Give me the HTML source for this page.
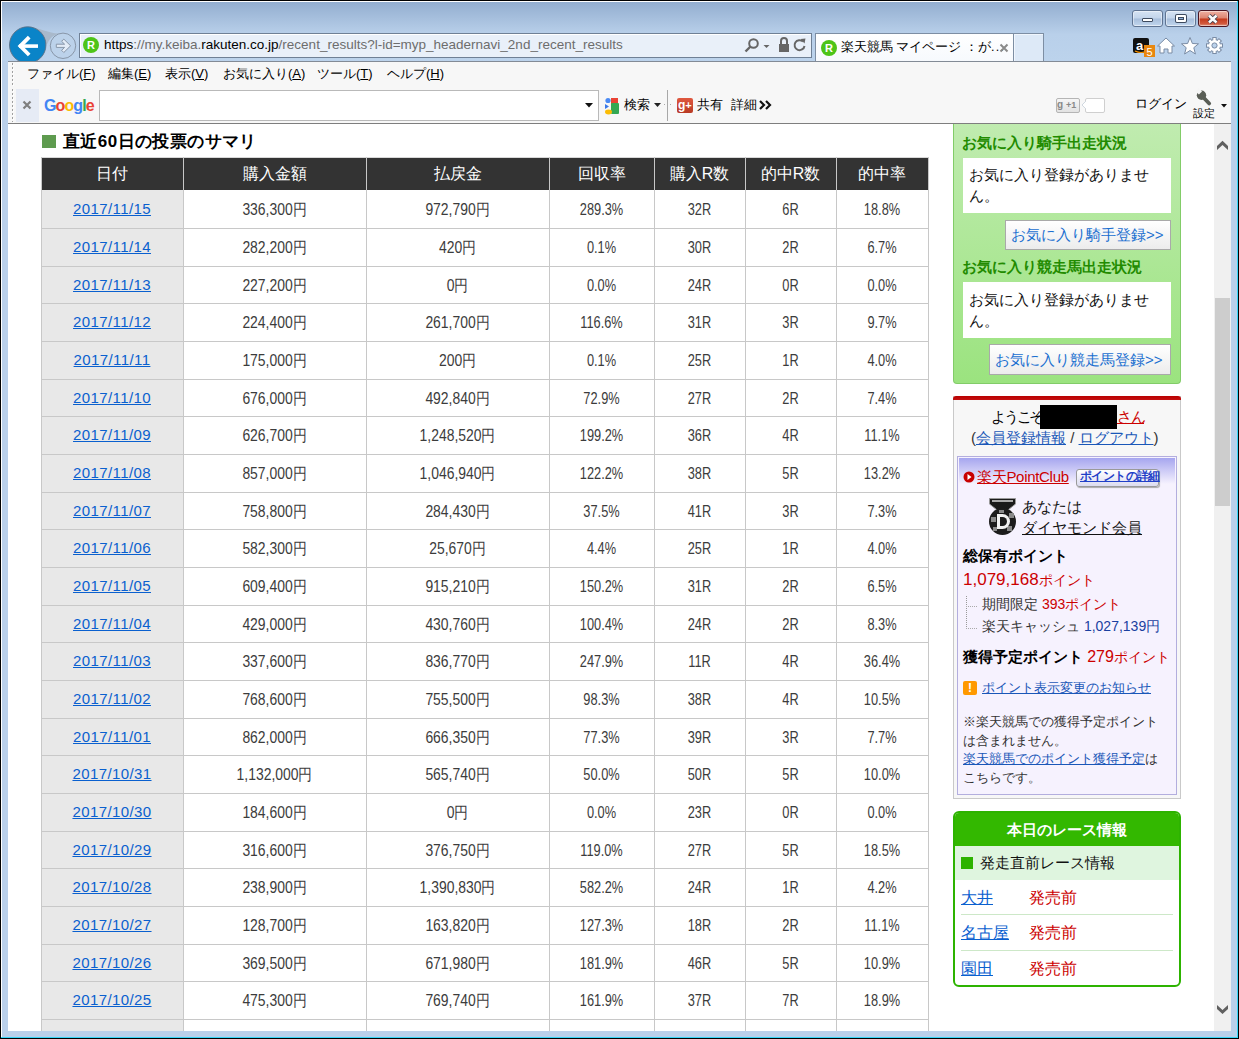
<!DOCTYPE html>
<html><head><meta charset="utf-8">
<style>
html,body{margin:0;padding:0;}
body{width:1239px;height:1039px;position:relative;overflow:hidden;background:#000;font-family:"Liberation Sans",sans-serif;color:#000;}
.a{position:absolute;}
.t{position:absolute;white-space:nowrap;line-height:1;}
.c{position:absolute;white-space:nowrap;line-height:1;text-align:center;}
u{text-decoration:underline;}
</style></head><body>

<div class="a" style="left:1px;top:1px;width:1237px;height:1037px;background:#38d6f8;"></div>
<div class="a" style="left:1px;top:1px;width:1236px;height:1036px;background:#bad0ea;"></div>
<div class="a" style="left:1px;top:1px;width:1236px;height:1px;background:#fff;"></div>
<div class="a" style="left:1px;top:1px;width:1px;height:1036px;background:#fff;"></div>
<div class="a" style="left:2px;top:2px;width:1235px;height:59px;background:linear-gradient(#93aed0,#b9d0ea 55%,#bcd3ec);"></div>
<div class="a" style="left:1132px;top:10px;width:29px;height:15px;border:1px solid #5f7492;border-radius:3px;background:linear-gradient(#d6e3f3,#c3d5eb 48%,#a7bedb 52%,#bcd1ea 90%,#d0e0f2);box-shadow:inset 0 0 0 1px rgba(255,255,255,.45);"><div class="a" style="left:9px;top:7px;width:9px;height:2px;background:#fff;border:1px solid #3d4a5e;border-radius:1px;"></div></div>
<div class="a" style="left:1165px;top:10px;width:29px;height:15px;border:1px solid #5f7492;border-radius:3px;background:linear-gradient(#d6e3f3,#c3d5eb 48%,#a7bedb 52%,#bcd1ea 90%,#d0e0f2);box-shadow:inset 0 0 0 1px rgba(255,255,255,.45);"><div class="a" style="left:10px;top:4px;width:6px;height:3px;border:2px solid #fff;background:#8fb0d8;box-shadow:0 0 0 1px #3d4a5e, inset 0 0 0 1px #3d4a5e;border-radius:1px;"></div></div>
<div class="a" style="left:1198px;top:10px;width:29px;height:15px;border:1px solid #4a1522;border-radius:3px;background:linear-gradient(#eeb0a2,#dc8470 48%,#c4391c 52%,#d25a3e 85%,#e09a88);box-shadow:inset 0 0 0 1px rgba(255,255,255,.45);"><svg class="a" style="left:7px;top:2px" width="14" height="12" viewBox="0 0 14 12"><path d="M3 2.5 L10.5 9.5 M10.5 2.5 L3 9.5" stroke="#3d3a48" stroke-width="4.4"/><path d="M3 2.5 L10.5 9.5 M10.5 2.5 L3 9.5" stroke="#fafafa" stroke-width="2.6"/></svg></div>
<svg class="a" style="left:0;top:20px" width="90" height="42" viewBox="0 20 90 42">
<path d="M27 27.2 C40 27 48 33.5 59 33.6 C53 35.5 49 39 47 44.5 L38 40 Z" fill="#a9b9cb"/>
<circle cx="63" cy="45.8" r="12.7" fill="#bcd2ea" stroke="#8896a8" stroke-width="1"/>
<path d="M56.3 44.2 L64.6 44.2 L61.6 41.3 L63.8 39.1 L70.6 45.8 L63.8 52.5 L61.6 50.3 L64.6 47.4 L56.3 47.4 Z" fill="#e3ecf7" stroke="#8896a8" stroke-width="1" stroke-linejoin="miter"/>
<circle cx="27.7" cy="45" r="18.2" fill="#0a84c8" stroke="#5b6f84" stroke-width="0.9"/>
<path d="M19 46.1 L38 46.1" stroke="#fff" stroke-width="3.6"/>
<path d="M29.2 37.2 L20.3 46.1 L29.2 55" stroke="#fff" stroke-width="3.8" fill="none" stroke-linecap="butt" stroke-linejoin="miter"/>
</svg>
<div class="a" style="left:79px;top:33px;width:731px;height:23px;border:1px solid #6f8095;background:#e9f0f9;box-shadow:inset 1px 1px 0 #fff;"></div>
<div class="a" style="left:83px;top:37px;width:16px;height:16px;border-radius:50%;background:#4dc418;"></div>
<div class="t" style="left:83px;top:38px;width:16px;text-align:center;font-size:11px;font-weight:bold;color:#fff;line-height:14px;">R</div>
<div class="t" style="left:104px;top:38px;font-size:13.5px;color:#6d6d6d;"><span style="color:#000">https</span>://my.keiba.<span style="color:#000">rakuten.co.jp</span>/recent_results?l-id=myp_headernavi_2nd_recent_results</div>
<svg class="a" style="left:742px;top:36px" width="66" height="20" viewBox="742 36 66 20">
<circle cx="753.5" cy="43.5" r="4.3" fill="none" stroke="#666" stroke-width="2"/>
<path d="M750.5 46.5 L745.5 51.5" stroke="#666" stroke-width="2.4"/>
<path d="M763.5 45 L769.5 45 L766.5 48 Z" fill="#666"/>
<rect x="779" y="44" width="10" height="8" fill="#666"/>
<path d="M781 44 L781 41 A3 3 0 0 1 787 41 L787 44" fill="none" stroke="#666" stroke-width="2"/>
<path d="M803 41.5 A5 5 0 1 0 804.5 46" fill="none" stroke="#666" stroke-width="2"/>
<path d="M800.5 39 L805.5 38.5 L804.5 43.5 Z" fill="#666"/>
</svg>
<div class="a" style="left:815px;top:33px;width:198px;height:29px;border:1px solid #7d8ea3;border-bottom:none;background:linear-gradient(#ffffff,#f6f9fd);"></div>
<div class="a" style="left:821px;top:40px;width:16px;height:16px;border-radius:50%;background:#4dc418;"></div>
<div class="t" style="left:821px;top:41px;width:16px;text-align:center;font-size:11px;font-weight:bold;color:#fff;line-height:14px;">R</div>
<div class="t" style="left:841px;top:41px;font-size:12.5px;color:#000;">楽天競馬 マイページ ：が<span style="letter-spacing:1.2px">...</span></div>
<svg class="a" style="left:999px;top:43px" width="10" height="10" viewBox="0 0 10 10"><path d="M1.5 1.5 L8.5 8.5 M8.5 1.5 L1.5 8.5" stroke="#8a8a8a" stroke-width="2"/></svg>
<div class="a" style="left:1013px;top:33px;width:29px;height:29px;border:1px solid #7d8ea3;border-bottom:none;background:#dde9f7;box-shadow:inset 1px 1px 0 #f0f6fd;"></div>
<svg class="a" style="left:1130px;top:35px" width="96" height="26" viewBox="1130 35 96 26">
<rect x="1133" y="38" width="16" height="15" rx="2" fill="#111"/>
<text x="1136" y="50" font-family="Liberation Sans" font-size="13" font-weight="bold" fill="#fff">a</text>
<path d="M1135 51 Q1141 54 1147 51" stroke="#f90" stroke-width="1.2" fill="none"/>
<rect x="1144" y="45" width="11" height="12" fill="#e8870f"/>
<text x="1146.5" y="55.5" font-family="Liberation Sans" font-size="11" fill="#fff">5</text>
<path d="M1166 38 L1174.5 46 L1172 46 L1172 53 L1168 53 L1168 49 L1164 49 L1164 53 L1160 53 L1160 46 L1157.5 46 Z" fill="#fff" stroke="#7a8ca5" stroke-width="1"/>
<path d="M1190 37.5 L1192.4 43.5 L1198.5 43.8 L1193.8 47.7 L1195.4 54 L1190 50.5 L1184.6 54 L1186.2 47.7 L1181.5 43.8 L1187.6 43.5 Z" fill="#fff" stroke="#7a8ca5" stroke-width="1"/>
<g transform="translate(1214.5 45.5)"><path d="M-1.5 -8 L1.5 -8 L2 -5.5 L4 -4.6 L6.1 -6.2 L8.2 -4.1 L6.6 -2 L7.5 0 L-0 0 Z" fill="none"/></g>
<circle cx="1214.5" cy="45.5" r="6" fill="#fff" stroke="#7a8ca5" stroke-width="1"/>
<circle cx="1214.5" cy="45.5" r="2.6" fill="#bcd3ec" stroke="#7a8ca5" stroke-width="1"/>
</svg>
<svg class="a" style="left:1130px;top:35px" width="96" height="26" viewBox="1130 35 96 26"><rect x="1212.8" y="37.5" width="3.4" height="4" fill="#fff" stroke="#7a8ca5" stroke-width="1" transform="rotate(0 1214.5 45.5)"/><rect x="1212.8" y="37.5" width="3.4" height="4" fill="#fff" stroke="#7a8ca5" stroke-width="1" transform="rotate(45 1214.5 45.5)"/><rect x="1212.8" y="37.5" width="3.4" height="4" fill="#fff" stroke="#7a8ca5" stroke-width="1" transform="rotate(90 1214.5 45.5)"/><rect x="1212.8" y="37.5" width="3.4" height="4" fill="#fff" stroke="#7a8ca5" stroke-width="1" transform="rotate(135 1214.5 45.5)"/><rect x="1212.8" y="37.5" width="3.4" height="4" fill="#fff" stroke="#7a8ca5" stroke-width="1" transform="rotate(180 1214.5 45.5)"/><rect x="1212.8" y="37.5" width="3.4" height="4" fill="#fff" stroke="#7a8ca5" stroke-width="1" transform="rotate(225 1214.5 45.5)"/><rect x="1212.8" y="37.5" width="3.4" height="4" fill="#fff" stroke="#7a8ca5" stroke-width="1" transform="rotate(270 1214.5 45.5)"/><rect x="1212.8" y="37.5" width="3.4" height="4" fill="#fff" stroke="#7a8ca5" stroke-width="1" transform="rotate(315 1214.5 45.5)"/><circle cx="1214.5" cy="45.5" r="5.5" fill="#fff"/><circle cx="1214.5" cy="45.5" r="2.6" fill="#bcd3ec" stroke="#7a8ca5" stroke-width="1"/></svg>
<div class="a" style="left:8px;top:61px;width:1223px;height:1px;background:#838b96;"></div>
<div class="a" style="left:8px;top:62px;width:1223px;height:61px;background:#f7f7f7;"></div>
<div class="a" style="left:8px;top:123px;width:1223px;height:1px;background:#7e7e7e;"></div>
<div class="a" style="left:12px;top:63px;width:1px;height:22px;background:repeating-linear-gradient(#a0a0a0 0 2px,transparent 2px 4px);"></div>
<div class="a" style="left:13px;top:64px;width:1px;height:22px;background:repeating-linear-gradient(#fff 0 2px,transparent 2px 4px);"></div>
<div class="a" style="left:12px;top:89px;width:1px;height:33px;background:repeating-linear-gradient(#a0a0a0 0 2px,transparent 2px 4px);"></div>
<div class="a" style="left:13px;top:90px;width:1px;height:33px;background:repeating-linear-gradient(#fff 0 2px,transparent 2px 4px);"></div>
<div class="t" style="left:27px;top:67px;font-size:13px;color:#000;">ファイル(<u>F</u>)</div>
<div class="t" style="left:108px;top:67px;font-size:13px;color:#000;">編集(<u>E</u>)</div>
<div class="t" style="left:165px;top:67px;font-size:13px;color:#000;">表示(<u>V</u>)</div>
<div class="t" style="left:223px;top:67px;font-size:13px;color:#000;">お気に入り(<u>A</u>)</div>
<div class="t" style="left:317px;top:67px;font-size:13px;color:#000;">ツール(<u>T</u>)</div>
<div class="t" style="left:387px;top:67px;font-size:13px;color:#000;">ヘルプ(<u>H</u>)</div>
<div class="a" style="left:16px;top:89px;width:23px;height:33px;background:#e6ebf5;"></div>
<svg class="a" style="left:22px;top:100px" width="10" height="10" viewBox="0 0 10 10"><path d="M1.5 1.5 L8.5 8.5 M8.5 1.5 L1.5 8.5" stroke="#7f7f7f" stroke-width="2.2"/></svg>
<div class="t" style="left:44px;top:98px;font-size:16px;font-weight:bold;letter-spacing:-0.9px;"><span style="color:#4285f4">G</span><span style="color:#ea4335">o</span><span style="color:#fbbc05">o</span><span style="color:#4285f4">g</span><span style="color:#34a853">l</span><span style="color:#ea4335">e</span></div>
<div class="a" style="left:99px;top:90px;width:498px;height:29px;border:1px solid #b9b9b9;background:#fff;"></div>
<svg class="a" style="left:585px;top:103px" width="9" height="5"><path d="M0 0 L8 0 L4 4.5 Z" fill="#111"/></svg>
<svg class="a" style="left:603px;top:97px" width="18" height="18" viewBox="0 0 18 18">
<circle cx="5" cy="3.5" r="2.6" fill="#4a8af4"/>
<path d="M2 7 L6 9.5 L2 12 Z" fill="#3b78e7"/>
<rect x="8" y="1" width="7" height="7" fill="#ea4335"/>
<rect x="8" y="6" width="8" height="11" rx="1" fill="#34a853"/>
<ellipse cx="5.5" cy="15" rx="3.5" ry="2.4" fill="#fbbc05"/>
</svg>
<div class="t" style="left:624px;top:98px;font-size:13px;">検索</div>
<svg class="a" style="left:654px;top:103px" width="8" height="5"><path d="M0 0 L7 0 L3.5 4 Z" fill="#222"/></svg>
<div class="a" style="left:664px;top:104px;width:1px;height:1px;background:#aaa;"></div><div class="a" style="left:670px;top:104px;width:1px;height:1px;background:#aaa;"></div>
<div class="a" style="left:667px;top:90px;width:1px;height:31px;background:#a8a8a8;"></div>
<div class="a" style="left:677px;top:98px;width:16px;height:15px;background:linear-gradient(#e0583f,#b83a24);border-radius:2px;"></div>
<div class="t" style="left:678px;top:99px;font-size:12px;font-weight:bold;color:#fff;">g<span style="font-size:11px">+</span></div>
<div class="t" style="left:697px;top:98px;font-size:13px;">共有</div>
<div class="t" style="left:731px;top:98px;font-size:13px;">詳細</div>
<svg class="a" style="left:759px;top:100px" width="13" height="10" viewBox="0 0 13 10"><path d="M1 1 L5 5 L1 9 M7 1 L11 5 L7 9" stroke="#111" stroke-width="2.2" fill="none"/></svg>
<div class="a" style="left:1056px;top:98px;width:22px;height:13px;border:1px solid #b5b5b5;border-radius:2px;background:linear-gradient(#f6f6f6,#e2e2e2);"></div>
<div class="t" style="left:1057px;top:100px;font-size:10px;color:#888;font-weight:bold;font-family:'Liberation Sans',sans-serif;">g <span style="font-size:9px">+1</span></div>
<div class="a" style="left:1085px;top:98px;width:18px;height:13px;border:1px solid #cfcfcf;border-radius:2px;background:#fff;"></div>
<svg class="a" style="left:1081px;top:100px" width="6" height="10" viewBox="0 0 6 10"><path d="M5 1 L1 5 L5 9" fill="#fff" stroke="#d0d8e0" stroke-width="1"/></svg>
<div class="t" style="left:1135px;top:98px;font-size:12.5px;">ログイン</div>
<svg class="a" style="left:1190px;top:86px" width="24" height="22" viewBox="1190 86 24 22">
<circle cx="1201.5" cy="95.3" r="4.7" fill="#5a5e56"/>
<path d="M1202 96 L1209.2 103.5" stroke="#5a5e56" stroke-width="3.8" stroke-linecap="round"/>
<path d="M1195.5 91.2 L1198.6 88.1 L1202 91.5 L1198.9 94.6 Z" fill="#f5f5f5"/>
</svg>
<div class="t" style="left:1193px;top:108px;font-size:11px;">設定</div>
<svg class="a" style="left:1221px;top:104px" width="7" height="4"><path d="M0 0 L6 0 L3 3.5 Z" fill="#111"/></svg>
<div class="a" style="left:8px;top:124px;width:1223px;height:907px;background:#fff;overflow:hidden;"><div class="a" style="left:-8px;top:-124px;width:1239px;height:1039px;">
<div class="a" style="left:42px;top:135px;width:14px;height:13px;background:#5e9b4f;"></div>
<div class="t" style="left:63px;top:133px;font-size:17px;font-weight:bold;letter-spacing:0.4px;">直近60日の投票のサマリ</div>
<div class="a" style="left:42px;top:158px;width:886px;height:32px;background:#333;"></div>
<div class="a" style="left:42px;top:190px;width:141px;height:900px;background:#e8e8e8;"></div>
<div class="a" style="left:41px;top:157px;width:888px;height:1px;background:#d8d8d8;"></div>
<div class="a" style="left:41px;top:157px;width:1px;height:900px;background:#c8c8c8;"></div>
<div class="a" style="left:183px;top:157px;width:1px;height:900px;background:#c8c8c8;"></div>
<div class="a" style="left:366px;top:157px;width:1px;height:900px;background:#c8c8c8;"></div>
<div class="a" style="left:549px;top:157px;width:1px;height:900px;background:#c8c8c8;"></div>
<div class="a" style="left:654px;top:157px;width:1px;height:900px;background:#c8c8c8;"></div>
<div class="a" style="left:745px;top:157px;width:1px;height:900px;background:#c8c8c8;"></div>
<div class="a" style="left:836px;top:157px;width:1px;height:900px;background:#c8c8c8;"></div>
<div class="a" style="left:928px;top:157px;width:1px;height:900px;background:#c8c8c8;"></div>
<div class="a" style="left:41px;top:228px;width:888px;height:1px;background:#c8c8c8;"></div>
<div class="a" style="left:41px;top:266px;width:888px;height:1px;background:#c8c8c8;"></div>
<div class="a" style="left:41px;top:303px;width:888px;height:1px;background:#c8c8c8;"></div>
<div class="a" style="left:41px;top:341px;width:888px;height:1px;background:#c8c8c8;"></div>
<div class="a" style="left:41px;top:379px;width:888px;height:1px;background:#c8c8c8;"></div>
<div class="a" style="left:41px;top:416px;width:888px;height:1px;background:#c8c8c8;"></div>
<div class="a" style="left:41px;top:454px;width:888px;height:1px;background:#c8c8c8;"></div>
<div class="a" style="left:41px;top:492px;width:888px;height:1px;background:#c8c8c8;"></div>
<div class="a" style="left:41px;top:529px;width:888px;height:1px;background:#c8c8c8;"></div>
<div class="a" style="left:41px;top:567px;width:888px;height:1px;background:#c8c8c8;"></div>
<div class="a" style="left:41px;top:605px;width:888px;height:1px;background:#c8c8c8;"></div>
<div class="a" style="left:41px;top:642px;width:888px;height:1px;background:#c8c8c8;"></div>
<div class="a" style="left:41px;top:680px;width:888px;height:1px;background:#c8c8c8;"></div>
<div class="a" style="left:41px;top:718px;width:888px;height:1px;background:#c8c8c8;"></div>
<div class="a" style="left:41px;top:755px;width:888px;height:1px;background:#c8c8c8;"></div>
<div class="a" style="left:41px;top:793px;width:888px;height:1px;background:#c8c8c8;"></div>
<div class="a" style="left:41px;top:831px;width:888px;height:1px;background:#c8c8c8;"></div>
<div class="a" style="left:41px;top:868px;width:888px;height:1px;background:#c8c8c8;"></div>
<div class="a" style="left:41px;top:906px;width:888px;height:1px;background:#c8c8c8;"></div>
<div class="a" style="left:41px;top:944px;width:888px;height:1px;background:#c8c8c8;"></div>
<div class="a" style="left:41px;top:981px;width:888px;height:1px;background:#c8c8c8;"></div>
<div class="a" style="left:41px;top:1019px;width:888px;height:1px;background:#c8c8c8;"></div>
<div class="a" style="left:41px;top:1057px;width:888px;height:1px;background:#c8c8c8;"></div>
<div class="c" style="left:41px;width:142px;top:166px;font-size:16px;color:#fff;">日付</div>
<div class="c" style="left:183px;width:183px;top:166px;font-size:16px;color:#fff;">購入金額</div>
<div class="c" style="left:366px;width:183px;top:166px;font-size:16px;color:#fff;">払戻金</div>
<div class="c" style="left:549px;width:105px;top:166px;font-size:16px;color:#fff;">回収率</div>
<div class="c" style="left:654px;width:91px;top:166px;font-size:16px;color:#fff;">購入R数</div>
<div class="c" style="left:745px;width:91px;top:166px;font-size:16px;color:#fff;">的中R数</div>
<div class="c" style="left:836px;width:92px;top:166px;font-size:16px;color:#fff;">的中率</div>
<div class="c" style="left:41px;width:142px;top:201.0px;font-size:15px;letter-spacing:0.4px;color:#0a60cf;"><u>2017/11/15</u></div>
<div class="c" style="left:183px;width:183px;top:202.0px;font-size:16px;color:#3c3c3c;transform:scaleX(.87);">336,300円</div>
<div class="c" style="left:366px;width:183px;top:202.0px;font-size:16px;color:#3c3c3c;transform:scaleX(.87);">972,790円</div>
<div class="c" style="left:549px;width:105px;top:202.0px;font-size:16px;color:#3c3c3c;transform:scaleX(.80);">289.3%</div>
<div class="c" style="left:654px;width:91px;top:202.0px;font-size:16px;color:#3c3c3c;transform:scaleX(.80);">32R</div>
<div class="c" style="left:745px;width:91px;top:202.0px;font-size:16px;color:#3c3c3c;transform:scaleX(.80);">6R</div>
<div class="c" style="left:836px;width:92px;top:202.0px;font-size:16px;color:#3c3c3c;transform:scaleX(.80);">18.8%</div>
<div class="c" style="left:41px;width:142px;top:239.0px;font-size:15px;letter-spacing:0.4px;color:#0a60cf;"><u>2017/11/14</u></div>
<div class="c" style="left:183px;width:183px;top:240.0px;font-size:16px;color:#3c3c3c;transform:scaleX(.87);">282,200円</div>
<div class="c" style="left:366px;width:183px;top:240.0px;font-size:16px;color:#3c3c3c;transform:scaleX(.87);">420円</div>
<div class="c" style="left:549px;width:105px;top:240.0px;font-size:16px;color:#3c3c3c;transform:scaleX(.80);">0.1%</div>
<div class="c" style="left:654px;width:91px;top:240.0px;font-size:16px;color:#3c3c3c;transform:scaleX(.80);">30R</div>
<div class="c" style="left:745px;width:91px;top:240.0px;font-size:16px;color:#3c3c3c;transform:scaleX(.80);">2R</div>
<div class="c" style="left:836px;width:92px;top:240.0px;font-size:16px;color:#3c3c3c;transform:scaleX(.80);">6.7%</div>
<div class="c" style="left:41px;width:142px;top:276.5px;font-size:15px;letter-spacing:0.4px;color:#0a60cf;"><u>2017/11/13</u></div>
<div class="c" style="left:183px;width:183px;top:277.5px;font-size:16px;color:#3c3c3c;transform:scaleX(.87);">227,200円</div>
<div class="c" style="left:366px;width:183px;top:277.5px;font-size:16px;color:#3c3c3c;transform:scaleX(.87);">0円</div>
<div class="c" style="left:549px;width:105px;top:277.5px;font-size:16px;color:#3c3c3c;transform:scaleX(.80);">0.0%</div>
<div class="c" style="left:654px;width:91px;top:277.5px;font-size:16px;color:#3c3c3c;transform:scaleX(.80);">24R</div>
<div class="c" style="left:745px;width:91px;top:277.5px;font-size:16px;color:#3c3c3c;transform:scaleX(.80);">0R</div>
<div class="c" style="left:836px;width:92px;top:277.5px;font-size:16px;color:#3c3c3c;transform:scaleX(.80);">0.0%</div>
<div class="c" style="left:41px;width:142px;top:314.0px;font-size:15px;letter-spacing:0.4px;color:#0a60cf;"><u>2017/11/12</u></div>
<div class="c" style="left:183px;width:183px;top:315.0px;font-size:16px;color:#3c3c3c;transform:scaleX(.87);">224,400円</div>
<div class="c" style="left:366px;width:183px;top:315.0px;font-size:16px;color:#3c3c3c;transform:scaleX(.87);">261,700円</div>
<div class="c" style="left:549px;width:105px;top:315.0px;font-size:16px;color:#3c3c3c;transform:scaleX(.80);">116.6%</div>
<div class="c" style="left:654px;width:91px;top:315.0px;font-size:16px;color:#3c3c3c;transform:scaleX(.80);">31R</div>
<div class="c" style="left:745px;width:91px;top:315.0px;font-size:16px;color:#3c3c3c;transform:scaleX(.80);">3R</div>
<div class="c" style="left:836px;width:92px;top:315.0px;font-size:16px;color:#3c3c3c;transform:scaleX(.80);">9.7%</div>
<div class="c" style="left:41px;width:142px;top:352.0px;font-size:15px;letter-spacing:0.4px;color:#0a60cf;"><u>2017/11/11</u></div>
<div class="c" style="left:183px;width:183px;top:353.0px;font-size:16px;color:#3c3c3c;transform:scaleX(.87);">175,000円</div>
<div class="c" style="left:366px;width:183px;top:353.0px;font-size:16px;color:#3c3c3c;transform:scaleX(.87);">200円</div>
<div class="c" style="left:549px;width:105px;top:353.0px;font-size:16px;color:#3c3c3c;transform:scaleX(.80);">0.1%</div>
<div class="c" style="left:654px;width:91px;top:353.0px;font-size:16px;color:#3c3c3c;transform:scaleX(.80);">25R</div>
<div class="c" style="left:745px;width:91px;top:353.0px;font-size:16px;color:#3c3c3c;transform:scaleX(.80);">1R</div>
<div class="c" style="left:836px;width:92px;top:353.0px;font-size:16px;color:#3c3c3c;transform:scaleX(.80);">4.0%</div>
<div class="c" style="left:41px;width:142px;top:389.5px;font-size:15px;letter-spacing:0.4px;color:#0a60cf;"><u>2017/11/10</u></div>
<div class="c" style="left:183px;width:183px;top:390.5px;font-size:16px;color:#3c3c3c;transform:scaleX(.87);">676,000円</div>
<div class="c" style="left:366px;width:183px;top:390.5px;font-size:16px;color:#3c3c3c;transform:scaleX(.87);">492,840円</div>
<div class="c" style="left:549px;width:105px;top:390.5px;font-size:16px;color:#3c3c3c;transform:scaleX(.80);">72.9%</div>
<div class="c" style="left:654px;width:91px;top:390.5px;font-size:16px;color:#3c3c3c;transform:scaleX(.80);">27R</div>
<div class="c" style="left:745px;width:91px;top:390.5px;font-size:16px;color:#3c3c3c;transform:scaleX(.80);">2R</div>
<div class="c" style="left:836px;width:92px;top:390.5px;font-size:16px;color:#3c3c3c;transform:scaleX(.80);">7.4%</div>
<div class="c" style="left:41px;width:142px;top:427.0px;font-size:15px;letter-spacing:0.4px;color:#0a60cf;"><u>2017/11/09</u></div>
<div class="c" style="left:183px;width:183px;top:428.0px;font-size:16px;color:#3c3c3c;transform:scaleX(.87);">626,700円</div>
<div class="c" style="left:366px;width:183px;top:428.0px;font-size:16px;color:#3c3c3c;transform:scaleX(.87);">1,248,520円</div>
<div class="c" style="left:549px;width:105px;top:428.0px;font-size:16px;color:#3c3c3c;transform:scaleX(.80);">199.2%</div>
<div class="c" style="left:654px;width:91px;top:428.0px;font-size:16px;color:#3c3c3c;transform:scaleX(.80);">36R</div>
<div class="c" style="left:745px;width:91px;top:428.0px;font-size:16px;color:#3c3c3c;transform:scaleX(.80);">4R</div>
<div class="c" style="left:836px;width:92px;top:428.0px;font-size:16px;color:#3c3c3c;transform:scaleX(.80);">11.1%</div>
<div class="c" style="left:41px;width:142px;top:465.0px;font-size:15px;letter-spacing:0.4px;color:#0a60cf;"><u>2017/11/08</u></div>
<div class="c" style="left:183px;width:183px;top:466.0px;font-size:16px;color:#3c3c3c;transform:scaleX(.87);">857,000円</div>
<div class="c" style="left:366px;width:183px;top:466.0px;font-size:16px;color:#3c3c3c;transform:scaleX(.87);">1,046,940円</div>
<div class="c" style="left:549px;width:105px;top:466.0px;font-size:16px;color:#3c3c3c;transform:scaleX(.80);">122.2%</div>
<div class="c" style="left:654px;width:91px;top:466.0px;font-size:16px;color:#3c3c3c;transform:scaleX(.80);">38R</div>
<div class="c" style="left:745px;width:91px;top:466.0px;font-size:16px;color:#3c3c3c;transform:scaleX(.80);">5R</div>
<div class="c" style="left:836px;width:92px;top:466.0px;font-size:16px;color:#3c3c3c;transform:scaleX(.80);">13.2%</div>
<div class="c" style="left:41px;width:142px;top:502.5px;font-size:15px;letter-spacing:0.4px;color:#0a60cf;"><u>2017/11/07</u></div>
<div class="c" style="left:183px;width:183px;top:503.5px;font-size:16px;color:#3c3c3c;transform:scaleX(.87);">758,800円</div>
<div class="c" style="left:366px;width:183px;top:503.5px;font-size:16px;color:#3c3c3c;transform:scaleX(.87);">284,430円</div>
<div class="c" style="left:549px;width:105px;top:503.5px;font-size:16px;color:#3c3c3c;transform:scaleX(.80);">37.5%</div>
<div class="c" style="left:654px;width:91px;top:503.5px;font-size:16px;color:#3c3c3c;transform:scaleX(.80);">41R</div>
<div class="c" style="left:745px;width:91px;top:503.5px;font-size:16px;color:#3c3c3c;transform:scaleX(.80);">3R</div>
<div class="c" style="left:836px;width:92px;top:503.5px;font-size:16px;color:#3c3c3c;transform:scaleX(.80);">7.3%</div>
<div class="c" style="left:41px;width:142px;top:540.0px;font-size:15px;letter-spacing:0.4px;color:#0a60cf;"><u>2017/11/06</u></div>
<div class="c" style="left:183px;width:183px;top:541.0px;font-size:16px;color:#3c3c3c;transform:scaleX(.87);">582,300円</div>
<div class="c" style="left:366px;width:183px;top:541.0px;font-size:16px;color:#3c3c3c;transform:scaleX(.87);">25,670円</div>
<div class="c" style="left:549px;width:105px;top:541.0px;font-size:16px;color:#3c3c3c;transform:scaleX(.80);">4.4%</div>
<div class="c" style="left:654px;width:91px;top:541.0px;font-size:16px;color:#3c3c3c;transform:scaleX(.80);">25R</div>
<div class="c" style="left:745px;width:91px;top:541.0px;font-size:16px;color:#3c3c3c;transform:scaleX(.80);">1R</div>
<div class="c" style="left:836px;width:92px;top:541.0px;font-size:16px;color:#3c3c3c;transform:scaleX(.80);">4.0%</div>
<div class="c" style="left:41px;width:142px;top:578.0px;font-size:15px;letter-spacing:0.4px;color:#0a60cf;"><u>2017/11/05</u></div>
<div class="c" style="left:183px;width:183px;top:579.0px;font-size:16px;color:#3c3c3c;transform:scaleX(.87);">609,400円</div>
<div class="c" style="left:366px;width:183px;top:579.0px;font-size:16px;color:#3c3c3c;transform:scaleX(.87);">915,210円</div>
<div class="c" style="left:549px;width:105px;top:579.0px;font-size:16px;color:#3c3c3c;transform:scaleX(.80);">150.2%</div>
<div class="c" style="left:654px;width:91px;top:579.0px;font-size:16px;color:#3c3c3c;transform:scaleX(.80);">31R</div>
<div class="c" style="left:745px;width:91px;top:579.0px;font-size:16px;color:#3c3c3c;transform:scaleX(.80);">2R</div>
<div class="c" style="left:836px;width:92px;top:579.0px;font-size:16px;color:#3c3c3c;transform:scaleX(.80);">6.5%</div>
<div class="c" style="left:41px;width:142px;top:615.5px;font-size:15px;letter-spacing:0.4px;color:#0a60cf;"><u>2017/11/04</u></div>
<div class="c" style="left:183px;width:183px;top:616.5px;font-size:16px;color:#3c3c3c;transform:scaleX(.87);">429,000円</div>
<div class="c" style="left:366px;width:183px;top:616.5px;font-size:16px;color:#3c3c3c;transform:scaleX(.87);">430,760円</div>
<div class="c" style="left:549px;width:105px;top:616.5px;font-size:16px;color:#3c3c3c;transform:scaleX(.80);">100.4%</div>
<div class="c" style="left:654px;width:91px;top:616.5px;font-size:16px;color:#3c3c3c;transform:scaleX(.80);">24R</div>
<div class="c" style="left:745px;width:91px;top:616.5px;font-size:16px;color:#3c3c3c;transform:scaleX(.80);">2R</div>
<div class="c" style="left:836px;width:92px;top:616.5px;font-size:16px;color:#3c3c3c;transform:scaleX(.80);">8.3%</div>
<div class="c" style="left:41px;width:142px;top:653.0px;font-size:15px;letter-spacing:0.4px;color:#0a60cf;"><u>2017/11/03</u></div>
<div class="c" style="left:183px;width:183px;top:654.0px;font-size:16px;color:#3c3c3c;transform:scaleX(.87);">337,600円</div>
<div class="c" style="left:366px;width:183px;top:654.0px;font-size:16px;color:#3c3c3c;transform:scaleX(.87);">836,770円</div>
<div class="c" style="left:549px;width:105px;top:654.0px;font-size:16px;color:#3c3c3c;transform:scaleX(.80);">247.9%</div>
<div class="c" style="left:654px;width:91px;top:654.0px;font-size:16px;color:#3c3c3c;transform:scaleX(.80);">11R</div>
<div class="c" style="left:745px;width:91px;top:654.0px;font-size:16px;color:#3c3c3c;transform:scaleX(.80);">4R</div>
<div class="c" style="left:836px;width:92px;top:654.0px;font-size:16px;color:#3c3c3c;transform:scaleX(.80);">36.4%</div>
<div class="c" style="left:41px;width:142px;top:691.0px;font-size:15px;letter-spacing:0.4px;color:#0a60cf;"><u>2017/11/02</u></div>
<div class="c" style="left:183px;width:183px;top:692.0px;font-size:16px;color:#3c3c3c;transform:scaleX(.87);">768,600円</div>
<div class="c" style="left:366px;width:183px;top:692.0px;font-size:16px;color:#3c3c3c;transform:scaleX(.87);">755,500円</div>
<div class="c" style="left:549px;width:105px;top:692.0px;font-size:16px;color:#3c3c3c;transform:scaleX(.80);">98.3%</div>
<div class="c" style="left:654px;width:91px;top:692.0px;font-size:16px;color:#3c3c3c;transform:scaleX(.80);">38R</div>
<div class="c" style="left:745px;width:91px;top:692.0px;font-size:16px;color:#3c3c3c;transform:scaleX(.80);">4R</div>
<div class="c" style="left:836px;width:92px;top:692.0px;font-size:16px;color:#3c3c3c;transform:scaleX(.80);">10.5%</div>
<div class="c" style="left:41px;width:142px;top:728.5px;font-size:15px;letter-spacing:0.4px;color:#0a60cf;"><u>2017/11/01</u></div>
<div class="c" style="left:183px;width:183px;top:729.5px;font-size:16px;color:#3c3c3c;transform:scaleX(.87);">862,000円</div>
<div class="c" style="left:366px;width:183px;top:729.5px;font-size:16px;color:#3c3c3c;transform:scaleX(.87);">666,350円</div>
<div class="c" style="left:549px;width:105px;top:729.5px;font-size:16px;color:#3c3c3c;transform:scaleX(.80);">77.3%</div>
<div class="c" style="left:654px;width:91px;top:729.5px;font-size:16px;color:#3c3c3c;transform:scaleX(.80);">39R</div>
<div class="c" style="left:745px;width:91px;top:729.5px;font-size:16px;color:#3c3c3c;transform:scaleX(.80);">3R</div>
<div class="c" style="left:836px;width:92px;top:729.5px;font-size:16px;color:#3c3c3c;transform:scaleX(.80);">7.7%</div>
<div class="c" style="left:41px;width:142px;top:766.0px;font-size:15px;letter-spacing:0.4px;color:#0a60cf;"><u>2017/10/31</u></div>
<div class="c" style="left:183px;width:183px;top:767.0px;font-size:16px;color:#3c3c3c;transform:scaleX(.87);">1,132,000円</div>
<div class="c" style="left:366px;width:183px;top:767.0px;font-size:16px;color:#3c3c3c;transform:scaleX(.87);">565,740円</div>
<div class="c" style="left:549px;width:105px;top:767.0px;font-size:16px;color:#3c3c3c;transform:scaleX(.80);">50.0%</div>
<div class="c" style="left:654px;width:91px;top:767.0px;font-size:16px;color:#3c3c3c;transform:scaleX(.80);">50R</div>
<div class="c" style="left:745px;width:91px;top:767.0px;font-size:16px;color:#3c3c3c;transform:scaleX(.80);">5R</div>
<div class="c" style="left:836px;width:92px;top:767.0px;font-size:16px;color:#3c3c3c;transform:scaleX(.80);">10.0%</div>
<div class="c" style="left:41px;width:142px;top:804.0px;font-size:15px;letter-spacing:0.4px;color:#0a60cf;"><u>2017/10/30</u></div>
<div class="c" style="left:183px;width:183px;top:805.0px;font-size:16px;color:#3c3c3c;transform:scaleX(.87);">184,600円</div>
<div class="c" style="left:366px;width:183px;top:805.0px;font-size:16px;color:#3c3c3c;transform:scaleX(.87);">0円</div>
<div class="c" style="left:549px;width:105px;top:805.0px;font-size:16px;color:#3c3c3c;transform:scaleX(.80);">0.0%</div>
<div class="c" style="left:654px;width:91px;top:805.0px;font-size:16px;color:#3c3c3c;transform:scaleX(.80);">23R</div>
<div class="c" style="left:745px;width:91px;top:805.0px;font-size:16px;color:#3c3c3c;transform:scaleX(.80);">0R</div>
<div class="c" style="left:836px;width:92px;top:805.0px;font-size:16px;color:#3c3c3c;transform:scaleX(.80);">0.0%</div>
<div class="c" style="left:41px;width:142px;top:841.5px;font-size:15px;letter-spacing:0.4px;color:#0a60cf;"><u>2017/10/29</u></div>
<div class="c" style="left:183px;width:183px;top:842.5px;font-size:16px;color:#3c3c3c;transform:scaleX(.87);">316,600円</div>
<div class="c" style="left:366px;width:183px;top:842.5px;font-size:16px;color:#3c3c3c;transform:scaleX(.87);">376,750円</div>
<div class="c" style="left:549px;width:105px;top:842.5px;font-size:16px;color:#3c3c3c;transform:scaleX(.80);">119.0%</div>
<div class="c" style="left:654px;width:91px;top:842.5px;font-size:16px;color:#3c3c3c;transform:scaleX(.80);">27R</div>
<div class="c" style="left:745px;width:91px;top:842.5px;font-size:16px;color:#3c3c3c;transform:scaleX(.80);">5R</div>
<div class="c" style="left:836px;width:92px;top:842.5px;font-size:16px;color:#3c3c3c;transform:scaleX(.80);">18.5%</div>
<div class="c" style="left:41px;width:142px;top:879.0px;font-size:15px;letter-spacing:0.4px;color:#0a60cf;"><u>2017/10/28</u></div>
<div class="c" style="left:183px;width:183px;top:880.0px;font-size:16px;color:#3c3c3c;transform:scaleX(.87);">238,900円</div>
<div class="c" style="left:366px;width:183px;top:880.0px;font-size:16px;color:#3c3c3c;transform:scaleX(.87);">1,390,830円</div>
<div class="c" style="left:549px;width:105px;top:880.0px;font-size:16px;color:#3c3c3c;transform:scaleX(.80);">582.2%</div>
<div class="c" style="left:654px;width:91px;top:880.0px;font-size:16px;color:#3c3c3c;transform:scaleX(.80);">24R</div>
<div class="c" style="left:745px;width:91px;top:880.0px;font-size:16px;color:#3c3c3c;transform:scaleX(.80);">1R</div>
<div class="c" style="left:836px;width:92px;top:880.0px;font-size:16px;color:#3c3c3c;transform:scaleX(.80);">4.2%</div>
<div class="c" style="left:41px;width:142px;top:917.0px;font-size:15px;letter-spacing:0.4px;color:#0a60cf;"><u>2017/10/27</u></div>
<div class="c" style="left:183px;width:183px;top:918.0px;font-size:16px;color:#3c3c3c;transform:scaleX(.87);">128,700円</div>
<div class="c" style="left:366px;width:183px;top:918.0px;font-size:16px;color:#3c3c3c;transform:scaleX(.87);">163,820円</div>
<div class="c" style="left:549px;width:105px;top:918.0px;font-size:16px;color:#3c3c3c;transform:scaleX(.80);">127.3%</div>
<div class="c" style="left:654px;width:91px;top:918.0px;font-size:16px;color:#3c3c3c;transform:scaleX(.80);">18R</div>
<div class="c" style="left:745px;width:91px;top:918.0px;font-size:16px;color:#3c3c3c;transform:scaleX(.80);">2R</div>
<div class="c" style="left:836px;width:92px;top:918.0px;font-size:16px;color:#3c3c3c;transform:scaleX(.80);">11.1%</div>
<div class="c" style="left:41px;width:142px;top:954.5px;font-size:15px;letter-spacing:0.4px;color:#0a60cf;"><u>2017/10/26</u></div>
<div class="c" style="left:183px;width:183px;top:955.5px;font-size:16px;color:#3c3c3c;transform:scaleX(.87);">369,500円</div>
<div class="c" style="left:366px;width:183px;top:955.5px;font-size:16px;color:#3c3c3c;transform:scaleX(.87);">671,980円</div>
<div class="c" style="left:549px;width:105px;top:955.5px;font-size:16px;color:#3c3c3c;transform:scaleX(.80);">181.9%</div>
<div class="c" style="left:654px;width:91px;top:955.5px;font-size:16px;color:#3c3c3c;transform:scaleX(.80);">46R</div>
<div class="c" style="left:745px;width:91px;top:955.5px;font-size:16px;color:#3c3c3c;transform:scaleX(.80);">5R</div>
<div class="c" style="left:836px;width:92px;top:955.5px;font-size:16px;color:#3c3c3c;transform:scaleX(.80);">10.9%</div>
<div class="c" style="left:41px;width:142px;top:992.0px;font-size:15px;letter-spacing:0.4px;color:#0a60cf;"><u>2017/10/25</u></div>
<div class="c" style="left:183px;width:183px;top:993.0px;font-size:16px;color:#3c3c3c;transform:scaleX(.87);">475,300円</div>
<div class="c" style="left:366px;width:183px;top:993.0px;font-size:16px;color:#3c3c3c;transform:scaleX(.87);">769,740円</div>
<div class="c" style="left:549px;width:105px;top:993.0px;font-size:16px;color:#3c3c3c;transform:scaleX(.80);">161.9%</div>
<div class="c" style="left:654px;width:91px;top:993.0px;font-size:16px;color:#3c3c3c;transform:scaleX(.80);">37R</div>
<div class="c" style="left:745px;width:91px;top:993.0px;font-size:16px;color:#3c3c3c;transform:scaleX(.80);">7R</div>
<div class="c" style="left:836px;width:92px;top:993.0px;font-size:16px;color:#3c3c3c;transform:scaleX(.80);">18.9%</div>
<div class="c" style="left:41px;width:142px;top:1030.0px;font-size:15px;letter-spacing:0.4px;color:#0a60cf;"><u>2017/10/24</u></div>
<div class="a" style="left:953px;top:110px;width:226px;height:273px;border:1px solid #82cc68;border-top:none;border-radius:0 0 4px 4px;background:linear-gradient(#c2ecb2,#9be37f);"></div>
<div class="t" style="left:962px;top:135px;font-size:15px;font-weight:bold;color:#228b00;">お気に入り騎手出走状況</div>
<div class="a" style="left:963px;top:158px;width:208px;height:55px;background:#fff;"></div>
<div class="a" style="left:969px;top:164px;width:195px;font-size:15px;line-height:21px;color:#111;white-space:nowrap;">お気に入り登録がありませ<br>ん。</div>
<div class="a" style="left:1005px;top:220px;width:164px;height:28px;border:1px solid #a9a9a9;background:linear-gradient(#fff,#ececec);"></div>
<div class="t" style="left:1011px;top:227px;font-size:15px;color:#1a6fd0;">お気に入り騎手登録&gt;&gt;</div>
<div class="t" style="left:962px;top:259px;font-size:15px;font-weight:bold;color:#228b00;">お気に入り競走馬出走状況</div>
<div class="a" style="left:963px;top:282px;width:208px;height:56px;background:#fff;"></div>
<div class="a" style="left:969px;top:289px;width:195px;font-size:15px;line-height:21px;color:#111;white-space:nowrap;">お気に入り登録がありませ<br>ん。</div>
<div class="a" style="left:989px;top:344px;width:180px;height:29px;border:1px solid #a9a9a9;background:linear-gradient(#fff,#ececec);"></div>
<div class="t" style="left:995px;top:352px;font-size:15px;color:#1a6fd0;">お気に入り競走馬登録&gt;&gt;</div>
<div class="a" style="left:953px;top:396px;width:226px;height:402px;border:1px solid #c9c9c9;border-top:none;background:#f7f7f7;"></div>
<div class="a" style="left:953px;top:396px;width:228px;height:4px;background:linear-gradient(#b80000,#c51010);border-radius:3px 3px 0 0;"></div>
<div class="t" style="left:991px;top:409px;font-size:15px;color:#000;letter-spacing:-2.2px;">ようこそ</div>
<div class="a" style="left:1040px;top:405px;width:77px;height:24px;background:#000;"></div>
<div class="t" style="left:1117px;top:409px;font-size:15px;color:#c00;letter-spacing:-1.5px;"><u>さん</u></div>
<div class="t" style="left:971px;top:430px;font-size:15px;color:#333;">(<u style="color:#1a57b8">会員登録情報</u> / <u style="color:#1a57b8">ログアウト</u>)</div>
<div class="a" style="left:957px;top:456px;width:218px;height:337px;border:1px solid #b3aede;background:#f6f2fe;"></div>
<div class="a" style="left:959px;top:458px;width:216px;height:26px;background:linear-gradient(#a6a6ef,#f6f2fe);"></div>
<svg class="a" style="left:963px;top:471px" width="12" height="12" viewBox="0 0 12 12"><circle cx="6" cy="6" r="5.5" fill="#c80000"/><path d="M4.5 3 L8.5 6 L4.5 9 Z" fill="#fff"/></svg>
<div class="t" style="left:977px;top:469px;font-size:15px;color:#c00;letter-spacing:-0.3px;"><u>楽天PointClub</u></div>
<div class="a" style="left:1076px;top:469px;width:81px;height:16px;border:1px solid #9a9a9a;border-radius:3px;background:linear-gradient(#fff,#dcdcf0);box-shadow:1px 1px 1px #aaa;"></div>
<div class="t" style="left:1080px;top:471px;font-size:11.5px;font-weight:bold;color:#1f3fc8;letter-spacing:-0.6px;"><u>ポイントの詳細</u></div>
<svg class="a" style="left:987px;top:497px" width="31" height="40" viewBox="0 0 31 40">
<path d="M2.5 1.5 L28.5 1.5 L28.5 7 L21 13 L10 13 L2.5 7 Z" fill="#1a1a1a" stroke="#999" stroke-width="1"/>
<rect x="5" y="3" width="21" height="2" fill="#aaa"/>
<circle cx="15.5" cy="24.5" r="13.5" fill="#1c1c1c"/>
<path d="M4 20 L9 20 L9 25 L4 25 Z M22 16 L27 16 L27 21 L22 21 Z M20 29 L25 29 L25 34 L20 34 Z M6 30 L10 30 L10 34 L6 34 Z M12 13 L17 13 L17 16 L12 16 Z" fill="#8a8a8a"/>
<path d="M10 17 L15.5 17 A7.5 7.5 0 0 1 15.5 32 L10 32 Z" fill="#f2f2f2"/>
<path d="M13 20 L15.5 20 A4.5 4.5 0 0 1 15.5 29 L13 29 Z" fill="#1c1c1c"/>
</svg>
<div class="t" style="left:1022px;top:499px;font-size:15px;color:#111;">あなたは</div>
<div class="t" style="left:1022px;top:520px;font-size:15px;color:#111;"><u>ダイヤモンド会員</u></div>
<div class="t" style="left:963px;top:548px;font-size:15px;font-weight:bold;color:#000;">総保有ポイント</div>
<div class="t" style="left:963px;top:571px;font-size:16px;color:#c00;"><span style="font-size:17px;">1,079,168</span><span style="font-size:14px">ポイント</span></div>
<div class="a" style="left:966px;top:596px;width:1px;height:33px;background:repeating-linear-gradient(#999 0 1px,transparent 1px 2px);"></div>
<div class="a" style="left:966px;top:606px;width:11px;height:1px;background:repeating-linear-gradient(90deg,#aaa 0 1px,transparent 1px 2px);"></div>
<div class="a" style="left:966px;top:628px;width:11px;height:1px;background:repeating-linear-gradient(90deg,#aaa 0 1px,transparent 1px 2px);"></div>
<div class="t" style="left:982px;top:597px;font-size:14px;color:#333;">期間限定 <span style="color:#c00">393ポイント</span></div>
<div class="t" style="left:982px;top:619px;font-size:14px;color:#333;">楽天キャッシュ <span style="color:#1a3fa0">1,027,139円</span></div>
<div class="t" style="left:963px;top:649px;font-size:15px;color:#000;"><b>獲得予定ポイント</b> <span style="color:#c00;font-size:16px;">279</span><span style="color:#c00;font-size:14px">ポイント</span></div>
<div class="a" style="left:963px;top:681px;width:14px;height:14px;background:#f90;border-radius:2px;"></div>
<div class="t" style="left:963px;top:682px;width:14px;text-align:center;font-size:12px;font-weight:bold;color:#fff;">!</div>
<div class="t" style="left:982px;top:681px;font-size:13.3px;color:#1a57b8;"><u>ポイント表示変更のお知らせ</u></div>
<div class="a" style="left:963px;top:713px;width:210px;font-size:13px;line-height:18.5px;color:#333;white-space:nowrap;">※楽天競馬での獲得予定ポイント<br>は含まれません。<br><u style="color:#1a57b8">楽天競馬でのポイント獲得予定</u>は<br>こちらです。</div>
<div class="a" style="left:953px;top:811px;width:224px;height:172px;border:2px solid #2db300;border-radius:6px;background:#fff;overflow:hidden;"><div class="a" style="left:0;top:0;width:224px;height:33px;background:#33b800;"></div><div class="a" style="left:0;top:33px;width:224px;height:34px;background:#dff5df;"></div></div>
<div class="c" style="left:953px;width:228px;top:822px;font-size:15px;font-weight:bold;color:#fff;">本日のレース情報</div>
<div class="a" style="left:961px;top:857px;width:12px;height:12px;background:#2db300;"></div>
<div class="t" style="left:980px;top:855px;font-size:15px;color:#111;">発走直前レース情報</div>
<div class="t" style="left:961px;top:890px;font-size:16px;color:#0a60cf;"><u>大井</u></div>
<div class="t" style="left:1029px;top:890px;font-size:15.5px;color:#c00;">発売前</div>
<div class="t" style="left:961px;top:925px;font-size:16px;color:#0a60cf;"><u>名古屋</u></div>
<div class="t" style="left:1029px;top:925px;font-size:15.5px;color:#c00;">発売前</div>
<div class="t" style="left:961px;top:961px;font-size:16px;color:#0a60cf;"><u>園田</u></div>
<div class="t" style="left:1029px;top:961px;font-size:15.5px;color:#c00;">発売前</div>
<div class="a" style="left:961px;top:914px;width:212px;height:1px;background:#cde8c8;"></div>
<div class="a" style="left:961px;top:950px;width:212px;height:1px;background:#cde8c8;"></div>
<div class="a" style="left:1214px;top:124px;width:17px;height:907px;background:#f0f0f0;"></div>
<div class="a" style="left:1215px;top:298px;width:15px;height:208px;background:#cdcdcd;"></div>
<svg class="a" style="left:1214px;top:138px" width="17" height="15" viewBox="1214 138 17 15"><path d="M1217 146 L1222.5 140.8 L1228 146 L1228 150 L1222.5 145 L1217 150 Z" fill="#606060"/></svg>
<svg class="a" style="left:1214px;top:1002px" width="17" height="15" viewBox="1214 1002 17 15"><path d="M1217 1005 L1222.5 1010 L1228 1005 L1228 1009 L1222.5 1014.1 L1217 1009 Z" fill="#606060"/></svg>
</div></div>
</body></html>
